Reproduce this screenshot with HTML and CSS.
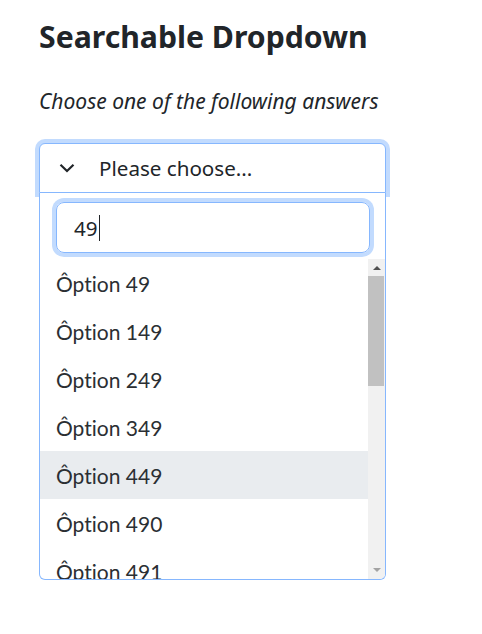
FILE: index.html
```html
<!DOCTYPE html>
<html lang="en">
<head>
<meta charset="utf-8">
<title>Searchable Dropdown</title>
<link rel="stylesheet" href="styles.css">
</head>
<body>
<main class="page">
  <h2 class="title">Searchable Dropdown</h2>
  <p class="subtitle">Choose one of the following answers</p>
  <div class="dropdown">
    <div class="toggle">
      <svg class="chevron" width="16" height="10" viewBox="0 0 16 10"><path d="M1.5 1.8 L8 8 L14.5 1.8" fill="none" stroke="#212529" stroke-width="2.2"/></svg>
      <span class="toggle-label">Please choose...</span>
    </div>
    <div class="panel">
      <div class="search"><span class="search-text">49</span><span class="caret"></span></div>
      <div class="list-wrap">
        <ul class="list">
          <li class="option">Ôption 49</li>
          <li class="option">Ôption 149</li>
          <li class="option">Ôption 249</li>
          <li class="option">Ôption 349</li>
          <li class="option active">Ôption 449</li>
          <li class="option">Ôption 490</li>
          <li class="option">Ôption 491</li>
        </ul>
        <div class="scrollbar">
          <div class="sb-btn"><svg width="8" height="5" viewBox="0 0 8 5"><path d="M0 5 L4 1 L8 5 Z" fill="#505050"/></svg></div>
          <div class="sb-track"><div class="sb-thumb"></div></div>
          <div class="sb-btn"><svg width="8" height="5" viewBox="0 0 8 5"><path d="M0 0 L4 4 L8 0 Z" fill="#a3a3a3"/></svg></div>
        </div>
      </div>
    </div>
  </div>
</main>
</body>
</html>
```

FILE: styles.css
```css
* { box-sizing: border-box; }
html, body { margin: 0; padding: 0; background: #fff; }
body {
  font-family: "Noto Sans", "Open Sans", sans-serif;
  color: #212529;
}
.page {
  padding: 19px 39px 40px;
  width: 482px;
}
.title {
  margin: 0;
  font-size: 30.2px;
  font-weight: 700;
  line-height: 36px;
  color: #212529;
}
.subtitle {
  margin: 31px 0 26px;
  font-size: 21px;
  font-style: italic;
  line-height: 31px;
}
.dropdown {
  width: 347px;
}
.toggle {
  height: 50px;
  display: flex;
  align-items: center;
  padding: 0 0 0 19px;
  border: 1px solid #86b7fe;
  border-radius: 6px 6px 0 0;
  box-shadow: 0 0 0 4px #c2dbfe;
  background: #fff;
  font-size: 20.6px;
}
.chevron { display: block; flex: none; }
.toggle-label { margin-left: 24px; }
.panel {
  position: relative;
  z-index: 1;
  background: #fff;
  border: 1px solid #86b7fe;
  border-top: none;
  border-radius: 0 0 6px 6px;
  padding-top: 9px;
}
.search {
  margin: 0 15px 6px 16px;
  height: 51px;
  border: 1px solid #86b7fe;
  border-radius: 8px;
  box-shadow: 0 0 0 4px #c2dbfe;
  padding: 0 17px;
  display: flex;
  align-items: center;
  font-size: 20.6px;
}
.caret {
  display: inline-block;
  width: 1px;
  height: 26px;
  background: #212529;
  margin-left: 1px;
}
.list-wrap {
  display: flex;
  height: 320px;
  overflow: hidden;
  border-radius: 0 0 5px 5px;
}
.list {
  flex: 1;
  margin: 0;
  padding: 0;
  list-style: none;
  overflow: hidden;
}
.option {
  height: 48px;
  flex: none;
  display: flex;
  align-items: center;
  padding: 0 16px;
  font-family: Lato, "Noto Sans", sans-serif;
  font-size: 21px;
  font-variant-ligatures: none;
  color: #2b2f33;
}
.option.active { background: #e9ecef; }
.scrollbar {
  width: 17px;
  flex: none;
  display: flex;
  flex-direction: column;
  background: #f1f1f1;
}
.sb-btn {
  height: 17px;
  display: flex;
  align-items: center;
  justify-content: center;
  flex: none;
}
.sb-track { flex: 1; }
.sb-thumb {
  height: 110px;
  margin: 0 1px 0 0;
  background: #c1c1c1;
}
```
